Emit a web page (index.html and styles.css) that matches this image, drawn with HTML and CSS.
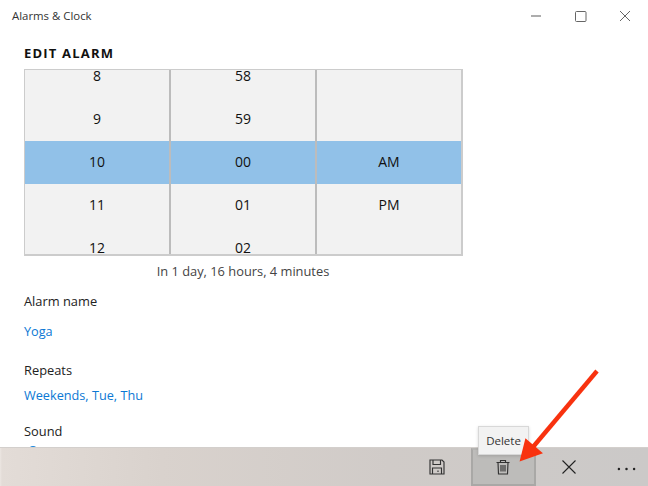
FILE: index.html
```html
<!DOCTYPE html>
<html lang="en">
<head>
<meta charset="utf-8">
<title>Alarms &amp; Clock</title>
<link rel="stylesheet" href="styles.css">
</head>
<body>
<div class="app">
  <header class="titlebar">
    <span class="app-title">Alarms &amp; Clock</span>
    <div class="win-controls">
      <svg class="win-icon" viewBox="0 0 45 32"><path d="M18 16h10" stroke="#777" stroke-width="1.2" fill="none"/></svg>
      <svg class="win-icon" viewBox="0 0 45 32"><rect x="17.5" y="11.5" width="10.5" height="10" rx="1" stroke="#666" fill="none"/></svg>
      <svg class="win-icon" viewBox="0 0 45 32"><path d="M17 11l10 10M27 11L17 21" stroke="#666" fill="none"/></svg>
    </div>
  </header>
  <main class="content">
    <h1 class="heading">EDIT ALARM</h1>
    <div class="picker">
      <div class="col">
        <div class="row">8</div><div class="row">9</div><div class="row sel">10</div><div class="row">11</div><div class="row">12</div>
      </div>
      <div class="col">
        <div class="row">58</div><div class="row">59</div><div class="row sel">00</div><div class="row">01</div><div class="row">02</div>
      </div>
      <div class="col">
        <div class="row"></div><div class="row"></div><div class="row sel">AM</div><div class="row">PM</div><div class="row"></div>
      </div>
    </div>
    <p class="until">In 1 day, 16 hours, 4 minutes</p>
    <div class="label label-name">Alarm name</div>
    <div class="value value-name">Yoga</div>
    <div class="label label-repeat">Repeats</div>
    <div class="value value-repeat">Weekends, Tue, Thu</div>
    <div class="label label-sound">Sound</div>
    <div class="sound-peek"></div>
  </main>
  <footer class="cmdbar">
    <button class="cmd cmd-save" aria-label="Save">
      <svg class="cmd-icon" viewBox="0 0 16 16"><path d="M1 1h12l2 2v12H1zM4 1v4.5h7.5V1M3.5 15V9h9v6M9 11.5v1.5" fill="none" stroke="#333" stroke-width="1.15"/></svg>
    </button>
    <button class="cmd cmd-active" aria-label="Delete">
      <svg class="cmd-icon" viewBox="0 0 16 16"><path d="M1.5 3.5h13M5.5 3.5v-2h5v2M3 3.5l.5 11.5h9l.5-11.5M6 6v6.5M8 6v6.5M10 6v6.5" fill="none" stroke="#333" stroke-width="1.15"/></svg>
    </button>
    <button class="cmd cmd-close" aria-label="Close">
      <svg class="cmd-icon" viewBox="0 0 16 16"><path d="M1.5 1.5l13 13M14.5 1.5l-13 13" fill="none" stroke="#222" stroke-width="1.1"/></svg>
    </button>
    <button class="cmd cmd-more" aria-label="More">
      <svg class="more-icon" viewBox="0 0 20 4"><circle cx="2" cy="2" r="1.3"/><circle cx="10" cy="2" r="1.3"/><circle cx="18" cy="2" r="1.3"/></svg>
    </button>
  </footer>
  <div class="tooltip">Delete</div>
  <svg class="arrow" viewBox="0 0 648 486"><path d="M597 371L533 447" stroke="#f8320f" stroke-width="4.4" fill="none"/><path d="M521 460L526 440 541 453Z" fill="#f8320f" stroke="#f8320f" stroke-width="2"/></svg>
</div>
</body>
</html>
```
FILE: styles.css
```css
* { box-sizing: border-box; }
html, body { margin: 0; padding: 0; }
body { width: 648px; height: 486px; overflow: hidden; background: #fff; font-family: "Open Sans", "Noto Sans", sans-serif; color: #1a1a1a; }
.app { position: relative; width: 648px; height: 486px; display: flex; flex-direction: column; }
.titlebar { height: 32px; flex: none; display: flex; align-items: center; justify-content: space-between; padding-left: 12px; }
.app-title { font-size: 11.4px; color: #333; position: relative; top: -1px; }
.win-controls { display: flex; }
.win-icon { width: 45px; height: 32px; display: block; }
.content { flex: 1; overflow: hidden; padding: 0 24px; min-height: 0; }
.heading { margin: 12px 0 7px; font-size: 13px; line-height: 18px; font-weight: 700; letter-spacing: 1.2px; color: #111; }
.picker { width: 439px; height: 187px; margin-left: -0.5px; display: flex; border: 2px solid #ccc; border-width: 1.5px 2px 2px 1.5px; background: #f2f2f2; }
.col { flex: 1; display: flex; flex-direction: column; justify-content: center; overflow: hidden; border-right: 2px solid rgba(90,90,90,.35); }
.col:last-child { border-right: 0; }
.row { flex: none; height: 43px; display: flex; align-items: center; justify-content: center; font-size: 14px; line-height: 18px; padding-left: 1px; color: #111; }
.sel { background: #91c1e8; padding-bottom: 1px; }
.until { width: 438px; margin: 6px 0 0; text-align: center; font-size: 12.85px; line-height: 18px; color: #444; }
.label, .value { font-size: 12.85px; line-height: 18px; }
.label { color: #222; }
.value { color: #0b78d4; font-size: 12.7px; }
.label-name { margin-top: 12px; }
.value-name { margin-top: 12px; }
.label-repeat { margin-top: 21px; }
.value-repeat { margin-top: 7px; }
.label-sound { margin-top: 18px; }
.sound-peek { width: 8px; height: 6px; margin: 6px 0 0 5px; border-radius: 4px 4px 0 0; border-top: 2px solid #1c86dc; }
.cmdbar { flex: none; height: 39px; display: flex; justify-content: flex-end; background: linear-gradient(90deg, #ece6e2 0, #e3dcd7 2px, #d9d2cd 25%, #d0cbc8 60%, #cbc9c8 100%); border-top: 1px solid #d3cfcc; }
.cmd { width: 63px; height: 38px; padding: 0; border: 0; background: transparent; display: flex; align-items: center; justify-content: center; }
.cmd-save { padding-right: 6px; }
.cmd-active { width: 65px; padding-right: 2px; background: #bdbcba; border: 2px solid #a9a8a6; border-top-color: #b5b4b2; }
.cmd-close { padding-left: 2px; }
.cmd-more { width: 49px; padding: 3px 0 0 5px; }
.cmd-icon { width: 16px; height: 16px; display: block; }
.more-icon { width: 19px; height: 4px; display: block; fill: #222; }
.tooltip { position: absolute; left: 478px; top: 426px; width: 51px; height: 29px; display: flex; align-items: center; justify-content: center; background: #f2f2f2; border: 1px solid #d8d8d8; box-shadow: 0 1px 3px rgba(0,0,0,.15); font-size: 11.5px; color: #333; }
.arrow { position: absolute; left: 0; top: 0; width: 648px; height: 486px; pointer-events: none; }
```
